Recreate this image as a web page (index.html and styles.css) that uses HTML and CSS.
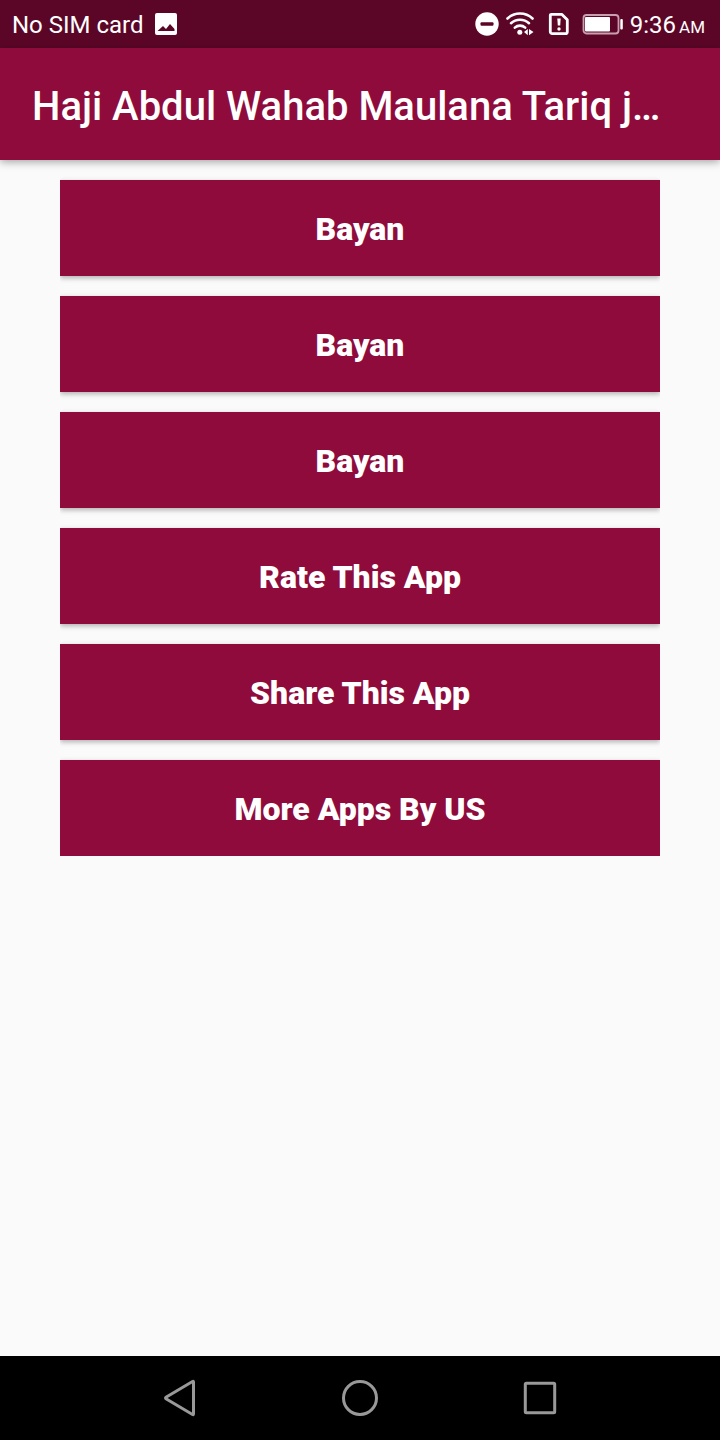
FILE: index.html
```html
<!DOCTYPE html>
<html lang="en">
<head>
  <meta charset="utf-8">
  <title>Haji Abdul Wahab Maulana Tariq j…</title>
  <meta name="viewport" content="width=device-width, initial-scale=1.0">
  <link rel="stylesheet" href="styles.css">
</head>
<body>
  <div class="status-bar">
    <div class="status-left">
      <span class="status-text">No SIM card</span>
      <svg width="24" height="24" viewBox="0 0 24 24">
        <path fill="#fff" fill-rule="evenodd" d="M3 1h18a2 2 0 0 1 2 2v18a2 2 0 0 1-2 2H3a2 2 0 0 1-2-2V3a2 2 0 0 1 2-2zM3.5 19h17v-2l-4.5-5-4 5-3-3-5.5 5z"/>
      </svg>
    </div>
    <div class="status-right">
      <svg width="24" height="24" viewBox="0 0 24 24">
        <circle cx="12" cy="12" r="11.7" fill="#fff"/>
        <rect x="5.5" y="10.2" width="13" height="3.6" rx="1" fill="#5c0627"/>
      </svg>
      <svg class="wifi" width="28" height="24" viewBox="0 0 28 24">
        <g fill="none" stroke="#fff" stroke-width="2.6" stroke-linecap="round">
          <path d="M1.5 6.5C8.5-.2 19.5-.2 26.5 6.5"/>
          <path d="M5 11.2c5-4.7 13-4.7 18 0"/>
          <path d="M8.8 15.6c3-2.7 7.4-2.7 10.4 0"/>
        </g>
        <circle cx="13.8" cy="20.3" r="2.5" fill="#fff"/>
        <path fill="#fff" d="M18 20l3.8-3v6.2zM23 17l4.5 3-4.5 3.2z"/>
      </svg>
      <svg class="sim" width="22" height="24" viewBox="0 0 22 24">
        <path fill="none" stroke="#fff" stroke-width="2.8" stroke-linejoin="round" d="M3.3 2.3h10.4l5.6 5.5v11.9a2 2 0 0 1-2 2H4.3a2 2 0 0 1-2-2V3.3a1 1 0 0 1 1-1z"/>
        <path fill="#fff" d="M9.3 6.5h3.4l-.5 7H9.8z"/>
        <circle cx="11" cy="17" r="1.7" fill="#fff"/>
      </svg>
      <svg class="battery" width="42" height="24" viewBox="0 0 42 24">
        <rect x="1.5" y="3" width="35" height="18.5" rx="3" fill="none" stroke="#c99fb0" stroke-width="1.8"/>
        <rect x="3" y="5" width="25" height="14.5" rx="1" fill="#fff"/>
        <rect x="38.3" y="7" width="2.5" height="10.5" rx="1" fill="#fff"/>
      </svg>
      <div class="status-text time"><span>9:36</span><small>AM</small></div>
    </div>
  </div>

  <header class="app-bar">
    <h1>Haji Abdul Wahab Maulana Tariq j…</h1>
  </header>

  <main class="content">
    <div class="button-list">
      <button type="button">Bayan</button>
      <button type="button">Bayan</button>
      <button type="button">Bayan</button>
      <button type="button">Rate This App</button>
      <button type="button">Share This App</button>
      <button type="button">More Apps By US</button>
    </div>
  </main>

  <nav class="nav-bar">
    <button type="button" aria-label="Back">
      <svg width="40" height="40" viewBox="0 0 40 40">
        <path d="M33.5 4v32q0 1-1 .5L6 20.8q-1-.8 0-1.6L32.5 3.5q1-.5 1 .5z"/>
      </svg>
    </button>
    <button type="button" aria-label="Home">
      <svg width="40" height="40" viewBox="0 0 40 40">
        <circle cx="20" cy="20" r="16.5"/>
      </svg>
    </button>
    <button type="button" aria-label="Recent apps">
      <svg width="40" height="40" viewBox="0 0 40 40">
        <rect x="5.3" y="5.3" width="29.4" height="29.4" rx="1"/>
      </svg>
    </button>
  </nav>
</body>
</html>
```
FILE: styles.css
```css
* {
  box-sizing: border-box;
}

body {
  display: flex;
  flex-direction: column;
  min-height: 100vh;
  margin: 0;
  font-family: Roboto, sans-serif;
  background-color: #fafafa;
  color: #fff;
}

svg {
  display: block;
  flex: none;
}

.status-bar {
  display: flex;
  align-items: center;
  justify-content: space-between;
  height: 48px;
  padding: 0 15px 0 12px;
  background-color: #5c0627;
  font-size: 24px;
  line-height: 32px;
}

.status-left,
.status-right {
  display: flex;
  align-items: center;
}

.status-left {
  gap: 10px;
}

.status-text {
  padding-top: 2px;
  white-space: nowrap;
}

.wifi {
  margin-left: 7px;
}

.sim {
  margin-left: 14px;
}

.battery {
  margin-left: 12px;
}

.time {
  display: flex;
  align-items: baseline;
  gap: 3px;
  margin-left: 6px;
}

.time small {
  font-size: 17px;
  line-height: 24px;
}

.app-bar {
  position: relative;
  display: flex;
  align-items: center;
  height: 112px;
  padding: 6px 32px 0;
  background-color: #8e0b3b;
  box-shadow: 0 2px 8px rgba(0, 0, 0, 0.35);
}

.app-bar h1 {
  margin: 0;
  font-size: 40px;
  font-weight: 500;
  line-height: 48px;
  white-space: nowrap;
  overflow: hidden;
  text-overflow: ellipsis;
}

.content {
  flex: 1;
  padding: 0 60px;
}

/* clips the button shadows at the sides and below the last one */
.button-list {
  display: flex;
  flex-direction: column;
  gap: 20px;
  padding-top: 20px;
  overflow: hidden;
}

.button-list button {
  height: 96px;
  padding: 2px 16px 0;
  border: none;
  background-color: #8e0b3b;
  box-shadow: 0 2px 5px rgba(0, 0, 0, 0.3);
  color: #fff;
  font-family: inherit;
  font-size: 32px;
  font-weight: 900;
  line-height: 40px;
  cursor: pointer;
}

.nav-bar {
  display: flex;
  height: 84px;
  padding: 0 12.5%;
  background-color: #000;
}

.nav-bar button {
  display: flex;
  flex: 1;
  align-items: center;
  justify-content: center;
  padding: 0;
  border: none;
  background: none;
  cursor: pointer;
}

.nav-bar svg {
  fill: none;
  stroke: #999;
  stroke-width: 3;
}
```
